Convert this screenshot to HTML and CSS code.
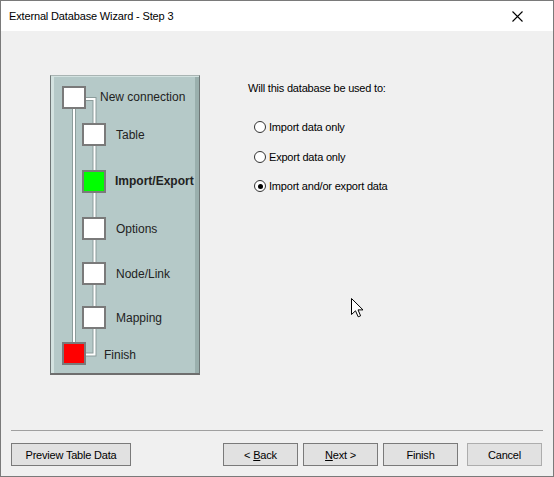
FILE: index.html
```html
<!DOCTYPE html>
<html>
<head>
<meta charset="utf-8">
<link rel="stylesheet" href="styles.css">
</head>
<body>
<div class="window">
  <div class="titlebar">
    <span class="title">External Database Wizard - Step 3</span>
    <svg class="close" width="11" height="11" viewBox="0 0 11 11"><path d="M0.5 0.5 L10.5 10.5 M10.5 0.5 L0.5 10.5" stroke="#000" stroke-width="1.1" fill="none"/></svg>
  </div>
  <div class="body">
    <div class="main">
      <div class="panel">
        <svg class="lines" width="148" height="297" viewBox="0 0 148 297">
          <g fill="none" stroke="#8c9c9b" stroke-width="4">
            <path d="M23 33 V266"/>
            <path d="M34 23 H43.5 V278.5 H34"/>
          </g>
          <g fill="none" stroke="#ffffff" stroke-width="2">
            <path d="M23 33 V266"/>
            <path d="M34 23 H43.5 V278.5 H34"/>
          </g>
        </svg>
        <div class="steps">
          <div class="step first"><span class="box"></span><span class="label">New connection</span></div>
          <div class="step indent"><span class="box"></span><span class="label">Table</span></div>
          <div class="step indent current"><span class="box green"></span><span class="label">Import/Export</span></div>
          <div class="step indent"><span class="box"></span><span class="label">Options</span></div>
          <div class="step indent"><span class="box"></span><span class="label">Node/Link</span></div>
          <div class="step indent"><span class="box"></span><span class="label">Mapping</span></div>
          <div class="step last"><span class="box red"></span><span class="label">Finish</span></div>
        </div>
      </div>
      <div class="options">
        <div class="question">Will this database be used to:</div>
        <div class="radios">
          <label class="radio"><span class="circle"></span><span>Import data only</span></label>
          <label class="radio"><span class="circle"></span><span>Export data only</span></label>
          <label class="radio"><span class="circle checked"></span><span>Import and/or export data</span></label>
        </div>
      </div>
    </div>
    <div class="separator"></div>
    <div class="footer">
      <button class="btn preview">Preview Table Data</button>
      <div class="spacer"></div>
      <button class="btn back">&lt; <u>B</u>ack</button>
      <button class="btn next"><u>N</u>ext &gt;</button>
      <button class="btn finish">Finish</button>
      <button class="btn cancel">Cancel</button>
    </div>
  </div>
  <svg class="cursor" width="13" height="20" viewBox="0 0 13 20"><path d="M0.5 0.5 V16.5 L4.5 12.8 L7.2 18.8 L9.6 17.8 L7 11.9 L12 11.9 Z" fill="#fff" stroke="#000" stroke-width="1" stroke-linejoin="miter"/></svg>
</div>
</body>
</html>
```

FILE: styles.css
```css
* { box-sizing: border-box; }
html, body { margin: 0; padding: 0; background: #f0f0f0; }
body { font-family: "Liberation Sans", Arial, sans-serif; }

.window {
  position: relative;
  width: 554px;
  height: 477px;
  border: 1px solid #7a7a7a;
  background: #f0f0f0;
  display: flex;
  flex-direction: column;
  overflow: hidden;
}

.titlebar {
  height: 30px;
  background: #ffffff;
  display: flex;
  align-items: center;
  padding-left: 8px;
  padding-right: 30px;
  flex: none;
}
.title {
  font-size: 11px;
  letter-spacing: -0.15px;
  color: #000;
  flex: 1;
}
.close { display: block; }

.body {
  flex: 1;
  display: flex;
  flex-direction: column;
}

.main {
  height: 399px;
  display: flex;
  align-items: flex-start;
  flex: none;
}

.panel {
  position: relative;
  margin-top: 44px;
  margin-left: 49px;
  width: 150px;
  height: 300px;
  background: #b5c9c8;
  border-left: 1px solid #6e7676;
  border-top: 1px solid #a9b4b3;
  border-right: 1px solid #6e7676;
  border-bottom: 2px solid #6e6e6e;
  box-shadow: inset 3px 0 0 #d3e2e0, inset 0 1px 0 #d3e2e0, inset -4px 0 0 #9aafad;
  padding: 10px 0 0 11px;
}
.lines {
  position: absolute;
  left: 0;
  top: 0;
}
.steps {
  position: relative;
  display: grid;
  grid-template-rows: 37px 47px 47px 45px 44px 36px 23px;
}
.step {
  display: flex;
  align-items: flex-start;
  font-size: 12px;
  color: #222;
}
.step.indent { padding-left: 20px; }
.box {
  width: 24px;
  height: 23px;
  border: 2px solid #7a7a7a;
  background: #fff;
  flex: none;
}
.box.green { background: #00ff00; }
.box.red { background: #ff0000; }
.label {
  margin-left: 9px;
  line-height: 23px;
  margin-top: 1px;
}
.first .label { margin-left: 14px; margin-top: 0; }
.last .label { margin-left: 18px; margin-top: 2px; }
.indent .label { margin-left: 10px; }
.current .label { font-weight: bold; margin-left: 9px; margin-top: 0; }

.options {
  margin-left: 48px;
  margin-top: 50px;
  font-size: 11px;
  letter-spacing: -0.2px;
  color: #000;
}
.question { line-height: 14px; }
.radios {
  margin-top: 25px;
  display: flex;
  flex-direction: column;
  gap: 15.5px;
  margin-left: 6px;
}
.radio {
  display: flex;
  align-items: center;
  line-height: 14px;
}
.circle {
  width: 12px;
  height: 12px;
  border: 1px solid #333;
  border-radius: 50%;
  background: #fff;
  margin-right: 3px;
  position: relative;
  flex: none;
}
.circle.checked::after {
  content: "";
  position: absolute;
  left: 2.5px;
  top: 2.5px;
  width: 5px;
  height: 5px;
  border-radius: 50%;
  background: #000;
}

.separator {
  height: 1px;
  background: #a0a0a0;
  margin: 0 10px 0 10px;
  flex: none;
}

.footer {
  display: flex;
  padding: 12px 11px 0 10px;
}
.spacer { flex: 1; }
.btn {
  width: 75px;
  height: 23px;
  background: #e1e1e1;
  border: 1px solid #7a7a7a;
  font-family: "Liberation Sans", Arial, sans-serif;
  font-size: 11px;
  letter-spacing: -0.2px;
  color: #000;
  padding: 0;
  margin: 0;
}
.btn u { text-decoration: underline; }
.btn.preview { width: 120px; }
.btn.next { margin-left: 5px; }
.btn.finish { margin-left: 5px; }
.btn.cancel { border-color: #adadad; margin-left: 9px; }

.cursor {
  position: absolute;
  left: 350px;
  top: 297px;
}
```
